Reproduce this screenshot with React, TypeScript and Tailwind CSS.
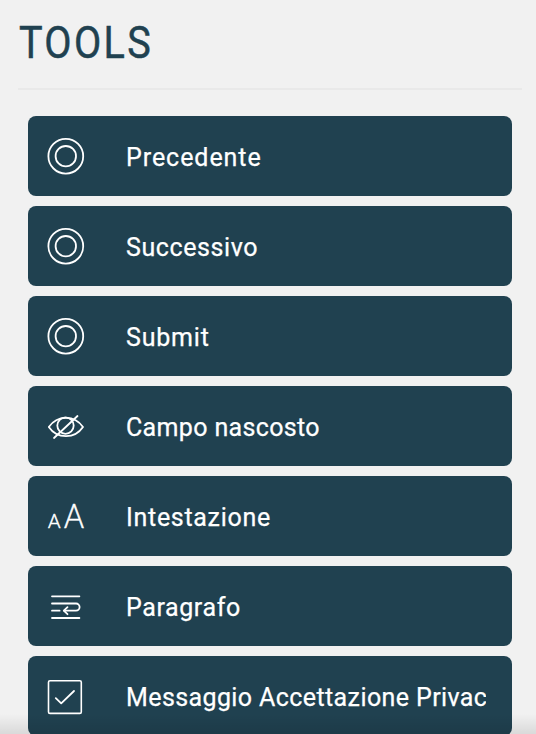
import type { ReactNode } from 'react'

interface Tool {
  label: string
  icon: ReactNode
  tracking: string
}

// ── Icons ──────────────────────────────────────────────────────
// All of them share a 40x40 canvas and inherit the row's colour

function Icon({ children }: { children: ReactNode }) {
  return (
    <svg
      viewBox="0 0 40 40"
      className="h-10 w-10 shrink-0"
      fill="none"
      stroke="currentColor"
      strokeWidth="1.8"
      strokeLinecap="round"
      strokeLinejoin="round"
      aria-hidden="true"
    >
      {children}
    </svg>
  )
}

const ButtonIcon = () => (
  <Icon>
    <circle cx="19.8" cy="20.2" r="17.4" />
    <circle cx="19.8" cy="20.2" r="10.2" />
  </Icon>
)

const HiddenIcon = () => (
  <Icon>
    <path d="M2.8 21C7 14.8 13 11.8 20 11.8s12.8 3 17 9.2c-4.2 6.2-10 9.2-17 9.2S7 27.2 2.8 21z" />
    <circle cx="19.5" cy="19.6" r="8.2" />
    <path d="M8 32L31.5 10" />
  </Icon>
)

const HeadingIcon = () => (
  <Icon>
    <g className="font-['Lato',sans-serif] font-light" fill="currentColor" strokeWidth="0.6" textAnchor="middle">
      <text x="8.2" y="32.3" fontSize="19.5" textLength="12.5" lengthAdjust="spacingAndGlyphs">A</text>
      <text x="28" y="32.3" fontSize="33" textLength="20" lengthAdjust="spacingAndGlyphs">A</text>
    </g>
  </Icon>
)

const ParagraphIcon = () => (
  <Icon>
    <path d="M6 10.3h27.4M6 17.5h24a3.5 3.5 0 0 1 0 7.2H18.2M6 24.7h7.6M6 32h27.4" />
    <path d="M21.5 21.2l-3.7 3.5 3.7 3.5" />
  </Icon>
)

const CheckIcon = () => (
  <Icon>
    <rect x="2.5" y="4.8" width="32.8" height="32.6" rx="1.5" strokeWidth="1.6" />
    <path d="M9.8 22.2l5.4 5.2L28 15" />
  </Icon>
)

const tools: Tool[] = [
  { label: 'Precedente', icon: <ButtonIcon />, tracking: 'tracking-[0.95px]' },
  { label: 'Successivo', icon: <ButtonIcon />, tracking: 'tracking-[0.6px]' },
  { label: 'Submit', icon: <ButtonIcon />, tracking: 'tracking-[0.8px]' },
  { label: 'Campo nascosto', icon: <HiddenIcon />, tracking: 'tracking-[0.35px]' },
  { label: 'Intestazione', icon: <HeadingIcon />, tracking: 'tracking-[0.7px]' },
  { label: 'Paragrafo', icon: <ParagraphIcon />, tracking: 'tracking-[0.6px]' },
  { label: 'Messaggio Accettazione Privacy', icon: <CheckIcon />, tracking: 'tracking-[0.4px]' },
]

export default function App() {
  return (
    <main className="relative h-[734px] w-[536px] overflow-hidden bg-[#f1f1f1] pl-[18px] pr-3.5 font-['Roboto',sans-serif] text-[#204150]">
      <h1 className="h-22 origin-left scale-x-[0.88] pt-[19px] pl-px text-[45px] leading-[48px] tracking-[2.7px] [-webkit-text-stroke:0.5px]">
        TOOLS
      </h1>
      <hr className="h-0.5 border-0 bg-[#e9e9e9]" />

      <ul className="flex flex-col gap-2.5 px-2.5 pt-[26px]">
        {tools.map(tool => (
          <li key={tool.label}>
            <button
              type="button"
              className="flex h-20 w-full items-center rounded-lg bg-[#204150] pr-[26px] pl-[18px] text-left text-white"
            >
              {tool.icon}
              <span
                className={`ml-10 flex-1 overflow-hidden pt-1 text-[25px] leading-8 whitespace-nowrap [-webkit-text-stroke:0.25px] ${tool.tracking}`}
              >
                {tool.label}
              </span>
            </button>
          </li>
        ))}
      </ul>

      {/* Fade over the cut-off end of the list */}
      <div className="pointer-events-none absolute inset-x-0 bottom-0 h-5 bg-linear-to-t from-black/10 to-transparent" />
    </main>
  )
}
